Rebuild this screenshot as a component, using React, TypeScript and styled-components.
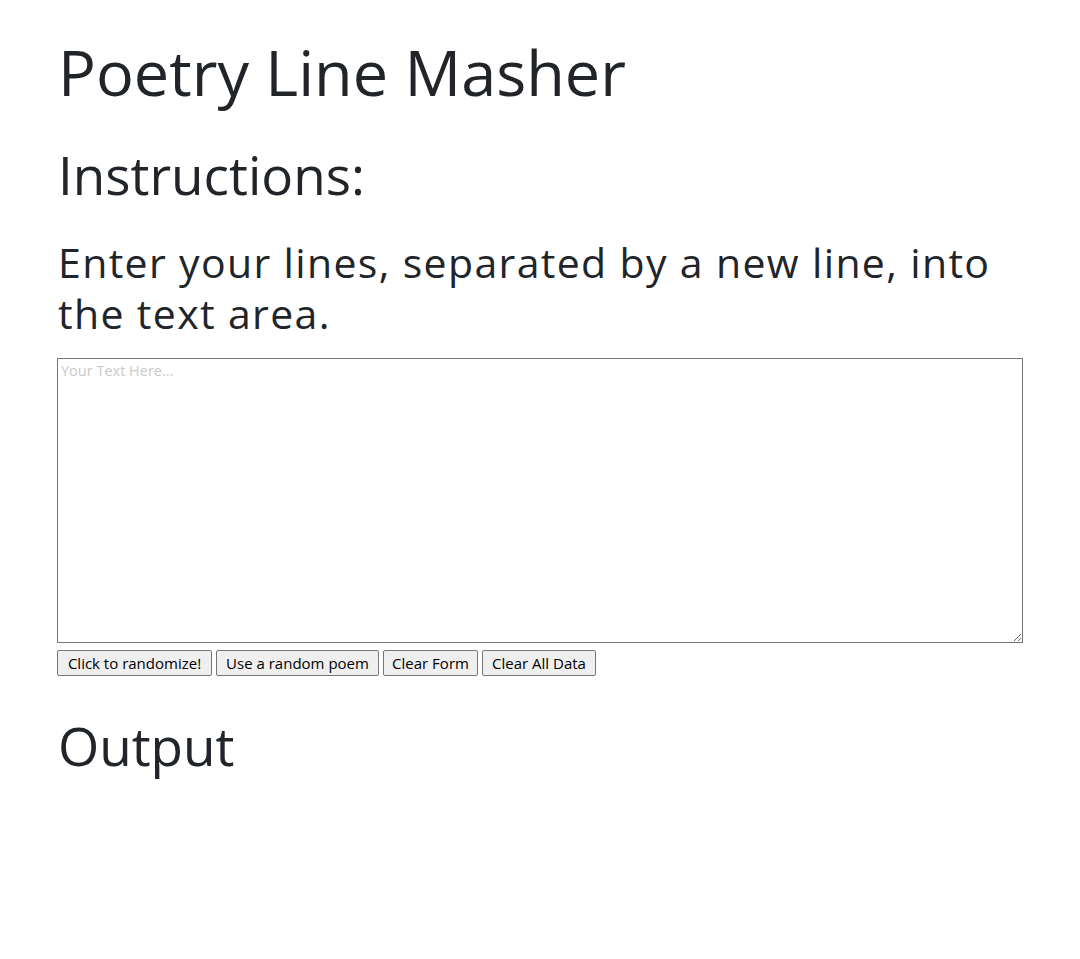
import React from "react";
import styled, { createGlobalStyle } from "styled-components";

const GlobalStyle = createGlobalStyle`
  html, body { margin: 0; padding: 0; background: #fff; }
  body { font-family: "Open Sans", "Noto Sans", sans-serif; color: #212529; }
`;

const Page = styled.main`
  padding: 28px 57px 40px 57px;
  display: flex;
  flex-direction: column;
`;

const Title = styled.h1`
  margin: 0 0 0 1px;
  font-size: 63px;
  font-weight: 400;
  line-height: 88px;
`;

const SectionHeading = styled.h2<{ $top: number }>`
  margin: ${(p) => p.$top}px 0 0 1px;
  font-size: 53px;
  font-weight: 400;
  line-height: 66px;
`;

const Instruction = styled.p`
  margin: 29px 0 0 1px;
  font-size: 41px;
  font-weight: 400;
  line-height: 51px;
  letter-spacing: 1.35px;
`;

const TextBox = styled.textarea`
  box-sizing: border-box;
  margin: 19px 0 0 0;
  width: 966px;
  height: 285px;
  border: 1px solid #767676;
  border-radius: 0;
  padding: 2px 3px;
  font-family: "Open Sans", sans-serif;
  font-size: 14.5px;
  color: #212529;
  resize: both;
  &::placeholder { color: #c9c9c9; }
`;

const ButtonRow = styled.div`
  display: flex;
  gap: 4px;
  margin-top: 7px;
`;

const Button = styled.button<{ $w: number }>`
  box-sizing: border-box;
  width: ${(p) => p.$w}px;
  height: 26px;
  padding: 0 4px;
  background: #efefef;
  border: 1px solid #767676;
  border-radius: 2px;
  font-family: "Open Sans", sans-serif;
  font-size: 15px;
  color: #000;
  white-space: nowrap;
`;

export default function App() {
  return (
    <>
      <GlobalStyle />
      <Page>
        <Title>Poetry Line Masher</Title>
        <SectionHeading $top={26}>Instructions:</SectionHeading>
        <Instruction>Enter your lines, separated by a new line, into the text area.</Instruction>
        <TextBox placeholder="Your Text Here..." />
        <ButtonRow>
          <Button $w={155}>Click to randomize!</Button>
          <Button $w={163}>Use a random poem</Button>
          <Button $w={95}>Clear Form</Button>
          <Button $w={114}>Clear All Data</Button>
        </ButtonRow>
        <SectionHeading $top={37}>Output</SectionHeading>
      </Page>
    </>
  );
}
